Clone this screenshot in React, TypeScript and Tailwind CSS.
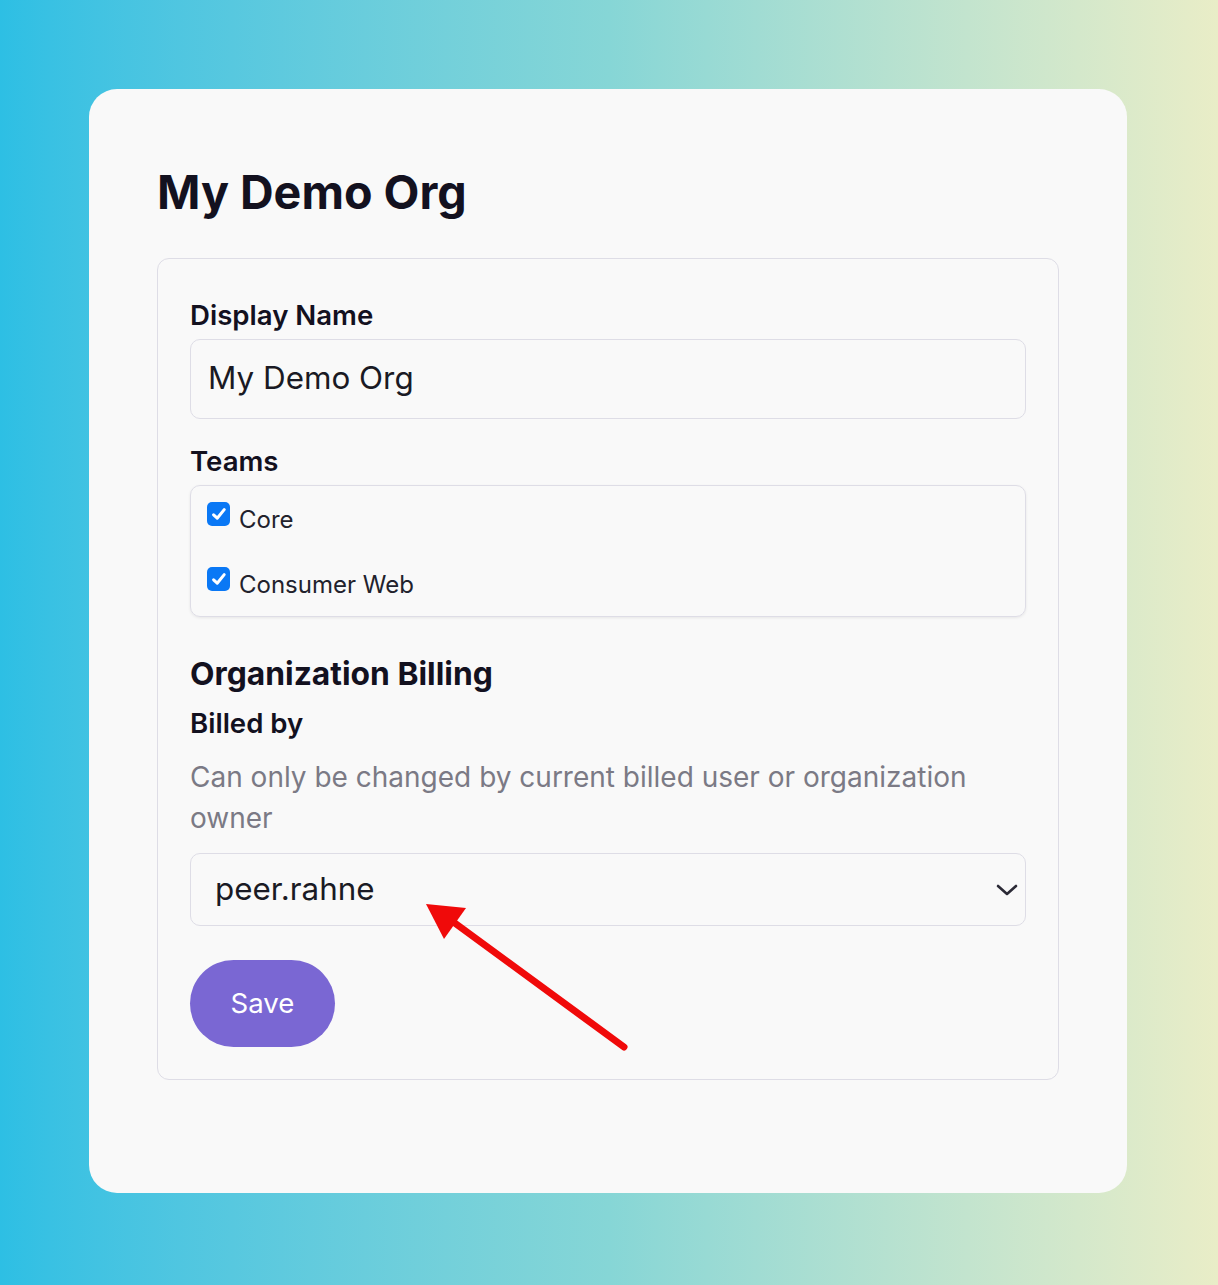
import React from "react";

function Check() {
  return (
    <span className="flex h-[24px] w-[23px] shrink-0 items-center justify-center rounded-[5px] bg-[#0a78f5]">
      <svg width="18" height="18" viewBox="0 0 18 18" fill="none">
        <path d="M3.6 9.8 L7.2 13.2 L14.2 4.6" stroke="white" strokeWidth="3" strokeLinecap="round" strokeLinejoin="round" />
      </svg>
    </span>
  );
}

export default function App() {
  return (
    <div
      className="relative min-h-[1285px] w-full bg-gradient-to-r from-[#2dbfe4] via-[#86d6d6] to-[#e9edc7] px-[89px] pt-[89px]"
      style={{ fontFamily: "Inter, 'Noto Sans', sans-serif" }}
    >
      <div className="h-[1104px] w-[1038px] rounded-[28px] bg-[#f9f9f9] px-[68px] pt-[77px]">
        <h1 className="text-[46.6px] leading-[53px] font-bold text-[#13111f]">My Demo Org</h1>
        <div className="mt-[39px] rounded-[12px] border border-[#dedde6] px-[32px] pt-[38px] pb-[32px]">
          <div className="text-[27.6px] leading-[36px] font-semibold text-[#13111f]">Display Name</div>
          <div className="mt-[6px] flex h-[80px] items-center rounded-[10px] border border-[#dedde6] bg-[#f9f9f9] pl-[17px] text-[31.4px] text-[#1a1a24]">
            My Demo Org
          </div>
          <div className="mt-[24px] text-[27.6px] leading-[36px] font-semibold text-[#13111f]">Teams</div>
          <div className="mt-[6px] flex h-[132px] flex-col gap-[35px] rounded-[10px] border border-[#dedde6] px-[16px] pt-[16px] shadow-[0_1px_3px_rgba(0,0,0,0.08)]">
            <label className="flex items-start gap-[9px] text-[24px] leading-[24px] text-[#22222c]">
              <Check />
              <span className="pt-[6px]">Core</span>
            </label>
            <label className="flex items-start gap-[9px] text-[24px] leading-[24px] text-[#22222c]">
              <Check />
              <span className="pt-[6px]">Consumer Web</span>
            </label>
          </div>
          <h2 className="mt-[37px] text-[31.8px] leading-[40px] font-bold text-[#13111f]">Organization Billing</h2>
          <div className="mt-[11px] text-[27.6px] leading-[36px] font-semibold text-[#13111f]">Billed by</div>
          <p className="mt-[16px] text-[28px] leading-[41px] text-[#7b7a85]">
            Can only be changed by current billed user or organization owner
          </p>
          <div className="mt-[14px] flex h-[73px] items-center justify-between rounded-[10px] border border-[#dedde6] pr-[6px] pl-[24px] text-[31.4px] text-[#1a1a24]">
            <span>peer.rahne</span>
            <svg width="24" height="24" viewBox="0 0 24 24" fill="none">
              <path d="M3 8 L12 16 L21 8" stroke="#2b2a36" strokeWidth="2.6" strokeLinecap="round" strokeLinejoin="round" />
            </svg>
          </div>
          <button className="mt-[34px] flex h-[87px] w-[145px] items-center justify-center rounded-full bg-[#7a67d3] text-[27.6px] text-white">
            Save
          </button>
        </div>
      </div>
      <svg className="pointer-events-none absolute top-0 left-0" width="1218" height="1285" viewBox="0 0 1218 1285">
        <line x1="624" y1="1047" x2="452" y2="921" stroke="#f00a0a" strokeWidth="7" strokeLinecap="round" />
        <polygon points="426,904 466,908 444,939" fill="#f00a0a" />
      </svg>
    </div>
  );
}
